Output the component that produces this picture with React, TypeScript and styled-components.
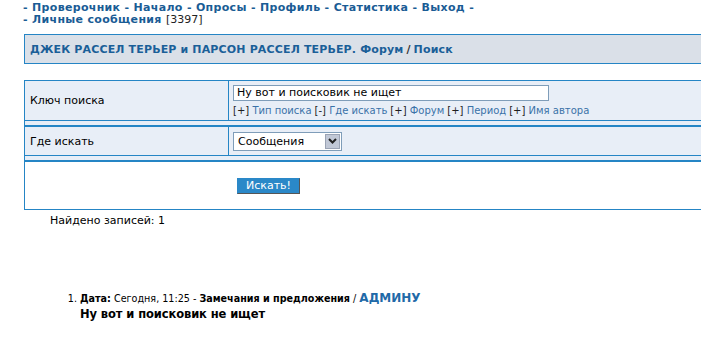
import styled, { createGlobalStyle } from "styled-components";

const GlobalStyle = createGlobalStyle`
    html, body {
        margin: 0;
        padding: 0;
        overflow: hidden;
        background: #ffffff;
    }
    body {
        font-family: "DejaVu Sans", Verdana, sans-serif;
        font-size: 11px;
        color: #000000;
    }
`;

const Page = styled.div`
    width: 760px;
    padding-left: 24px;
`;

const Nav = styled.div`
    margin-left: -1px;
    line-height: 12px;
    font-weight: bold;
    font-size: 11px;
    letter-spacing: 0.32px;
    color: #1a5c95;
    padding-top: 2px;
`;

const NavLink = styled.a`
    color: #1a5c95;
    text-decoration: none;
`;

const Counter = styled.span`
    font-weight: normal;
    color: #222222;
    letter-spacing: 0;
`;

const HeaderBox = styled.div`
    margin-top: 8px;
    height: 28px;
    border: 1px solid #2585c5;
    background: #dae0e8;
    display: flex;
    align-items: center;
    padding-left: 5px;
    font-weight: bold;
    font-size: 11px;
    letter-spacing: 0.15px;
    color: #1b5f98;
`;

const Slash = styled.span`
    color: #333333;
    margin: 0 3px;
`;

const Form = styled.div`
    margin-top: 16px;
    border-left: 1px solid #2585c5;
    border-top: 1px solid #2585c5;
`;

const Row = styled.div<{ $height: number; $white?: boolean }>`
    display: flex;
    height: ${(p) => p.$height}px;
    background: ${(p) => (p.$white ? "#ffffff" : "#e8eef7")};
    border-bottom: 1px solid #2585c5;
`;

const Spacer = styled.div`
    height: 4px;
    background: #e8eef7;
    border-bottom: 2px solid #2585c5;
`;

const LabelCell = styled.div`
    width: 198px;
    padding-left: 5px;
    border-right: 1px solid #2585c5;
    display: flex;
    align-items: center;
    font-size: 11px;
`;

const FieldCell = styled.div<{ $pad?: number }>`
    flex: 1;
    padding-left: ${(p) => p.$pad ?? 4}px;
    display: flex;
    flex-direction: column;
    justify-content: center;
`;

const TextInput = styled.div`
    width: 308px;
    height: 14px;
    border: 1px solid #7f9db9;
    background: #ffffff;
    padding: 0 3px;
    font-size: 11px;
    line-height: 14px;
`;

const Options = styled.div`
    margin-top: 4px;
    font-size: 10px;
    line-height: 12px;
    display: flex;
    gap: 3px;
    white-space: pre;
`;

const Option = styled.span`
    color: #1e1e1e;
`;

const OptionLink = styled.a`
    color: #3a72a8;
    text-decoration: none;
`;

const Select = styled.div`
    width: 103px;
    height: 17px;
    border: 1px solid #7f9db9;
    background: #ffffff;
    display: flex;
    align-items: center;
    justify-content: space-between;
    font-size: 11px;
    padding-left: 4px;
`;

const SelectArrow = styled.div`
    width: 15px;
    height: 15px;
    margin-right: 1px;
    background: #c1c8d6;
    border: 1px solid #9aa3b4;
    box-sizing: border-box;
    display: flex;
    align-items: center;
    justify-content: center;
`;

const SubmitButton = styled.button`
    width: 63px;
    height: 16px;
    padding: 0;
    background: #2a88c8;
    color: #ffffff;
    font-family: "DejaVu Sans", Verdana, sans-serif;
    font-size: 11px;
    line-height: 14px;
    border: 1px solid #2a88c8;
    border-right-color: #555555;
    border-bottom-color: #555555;
`;

const Found = styled.div`
    margin-top: 4px;
    padding-left: 26px;
    font-size: 11px;
`;

const Results = styled.ol`
    margin: 64px 0 0 0;
    padding-left: 56px;
    font-size: 9.6px;
`;

const ResultItem = styled.li`
    line-height: 14px;
`;

const Bold = styled.b`
    font-weight: bold;
`;

const Topic = styled.a`
    font-size: 12px;
    font-weight: bold;
    color: #1f6aa8;
    text-decoration: none;
`;

const Message = styled.div`
    font-size: 11.5px;
    letter-spacing: -0.1px;
    font-weight: bold;
    line-height: 16px;
`;

const navItems = [
    "Проверочник",
    "Начало",
    "Опросы",
    "Профиль",
    "Статистика",
    "Выход",
];

const options = ["Тип поиска", "Где искать", "Форум", "Период", "Имя автора"];

const App = () => {
    return (
        <Page>
            <GlobalStyle />
            <Nav>
                {navItems.map((item) => (
                    <span key={item}>
                        - <NavLink href="#">{item}</NavLink>{" "}
                    </span>
                ))}
                -
                <br />- <NavLink href="#">Личные сообщения</NavLink>{" "}
                <Counter>[3397]</Counter>
            </Nav>

            <HeaderBox>
                ДЖЕК РАССЕЛ ТЕРЬЕР и ПАРСОН РАССЕЛ ТЕРЬЕР. Форум
                <Slash>/</Slash>
                Поиск
            </HeaderBox>

            <Form>
                <Row $height={39}>
                    <LabelCell>Ключ поиска</LabelCell>
                    <FieldCell>
                        <TextInput>Ну вот и поисковик не ищет</TextInput>
                        <Options>
                            {options.map((o, i) => (
                                <Option key={o}>
                                    {i === 1 ? "[-] " : "[+] "}
                                    <OptionLink href="#">{o}</OptionLink>
                                </Option>
                            ))}
                        </Options>
                    </FieldCell>
                </Row>
                <Spacer />
                <Row $height={28}>
                    <LabelCell>Где искать</LabelCell>
                    <FieldCell>
                        <Select>
                            Сообщения
                            <SelectArrow>
                                <svg width="9" height="6" viewBox="0 0 9 6">
                                    <path
                                        d="M1 1 L4.5 4.5 L8 1"
                                        stroke="#222"
                                        strokeWidth="2"
                                        fill="none"
                                    />
                                </svg>
                            </SelectArrow>
                        </Select>
                    </FieldCell>
                </Row>
                <Spacer />
                <Row $height={47} $white>
                    <FieldCell $pad={212}>
                        <SubmitButton>Искать!</SubmitButton>
                    </FieldCell>
                </Row>
            </Form>

            <Found>Найдено записей: 1</Found>

            <Results>
                <ResultItem>
                    <Bold>Дата:</Bold> Сегодня, 11:25 -{" "}
                    <Bold>Замечания и предложения</Bold> /{" "}
                    <Topic href="#">АДМИНУ</Topic>
                    <Message>Ну вот и поисковик не ищет</Message>
                </ResultItem>
            </Results>
        </Page>
    );
};

export default App;
